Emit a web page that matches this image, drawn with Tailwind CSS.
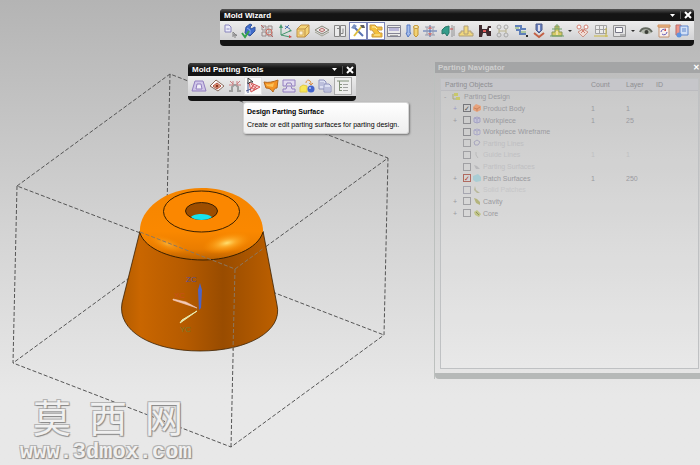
<!DOCTYPE html>
<html lang="en">
<head>
    <meta charset="UTF-8">
    <meta name="viewport" content="width=device-width, initial-scale=1.0">
    <title>Mold Wizard - Parting</title>
    <script src="https://cdn.jsdelivr.net/npm/@tailwindcss/browser@4"></script>
</head>
<body class="relative min-h-screen overflow-hidden bg-linear-to-b from-[#b4b4b4] via-[#d4d4d4] via-50% to-[#e8e8e8] to-85% font-['Liberation_Sans',Arial,sans-serif] text-[7px] leading-[11px] text-black">

    <!-- 3D viewport -->
    <main>
        <svg class="absolute left-0 top-0" width="400" height="460" viewBox="0 0 400 460" role="img" aria-label="Product body inside workpiece">
            <defs>
                <linearGradient id="wall" x1="0" x2="1">
                    <stop offset="0" stop-color="#b35c00"/>
                    <stop offset=".12" stop-color="#c96600"/>
                    <stop offset=".4" stop-color="#b65b00"/>
                    <stop offset=".65" stop-color="#994c00"/>
                    <stop offset="1" stop-color="#bd6000"/>
                </linearGradient>
                <linearGradient id="dome" x1="0" y1="0" x2="0" y2="1">
                    <stop offset="0" stop-color="#f58500"/>
                    <stop offset=".6" stop-color="#fa8800"/>
                    <stop offset=".85" stop-color="#ea7d00"/>
                    <stop offset="1" stop-color="#b96000"/>
                </linearGradient>
                <radialGradient id="shine">
                    <stop offset="0" stop-color="#ffe070"/>
                    <stop offset=".35" stop-color="#ffb330" stop-opacity=".8"/>
                    <stop offset="1" stop-color="#ff9000" stop-opacity="0"/>
                </radialGradient>
            </defs>
            <!-- workpiece edges behind the body -->
            <g fill="none" stroke="#555" stroke-width="1" stroke-dasharray="4 2">
                <path d="M17 186 170 74 388 158 235 269Z"/>
                <path d="M17 186 13 363 231 447 384 335 388 158"/>
                <path d="M170 74 166 251 13 363M166 251 384 335M235 269 231 447"/>
            </g>
            <!-- product body -->
            <path d="M140 231 122 303C117 331 152 351 200 351C248 351 283 331 277 305L263 231Z" fill="url(#wall)" stroke="#3a2000" stroke-width=".8"/>
            <path d="M140 233C138 212 162 188 202 188C240 188 264 211 263 232C258 249 231 260 203 260C172 260 145 249 140 233Z" fill="url(#dome)"/>
            <path d="M140 233C145 249 172 260 203 260C231 260 258 249 263 232" fill="none" stroke="#3a2000"/>
            <ellipse cx="227" cy="243" rx="25" ry="10" fill="url(#shine)" transform="rotate(-12 227 243)"/>
            <ellipse cx="167" cy="244" rx="20" ry="7" fill="url(#shine)" opacity=".45" transform="rotate(20 167 244)"/>
            <ellipse cx="201.500" cy="211.500" rx="38" ry="20.500" fill="#fb8700" stroke="#3a2000"/>
            <ellipse cx="201.500" cy="211" rx="16" ry="8.500" fill="#9d4e00" stroke="#3a2000"/>
            <path d="M191 217C194 213 208 213 212 217C208 221 195 221 191 217Z" fill="#18e4ec"/>
            <!-- workpiece edges in front of the body -->
            <path d="M140 232 235 269 264 248M235 269 233 350" fill="none" stroke="#8b7760" stroke-dasharray="4 2"/>
            <!-- datum axes -->
            <path d="M199 310 198 290 200 283 202 290 201 308Z" fill="#4d64c4"/>
            <path d="M197 308 173 300 173 299 186 302Z" fill="#f3c9b8" stroke="#f3c9b8" stroke-width=".6"/>
            <path d="M197 311 180 323 182 320Z" fill="#e8ecb0" stroke="#e8ecb0"/>
            <g font-family="Liberation Sans, Arial, sans-serif" font-size="8">
                <text x="186" y="282" fill="#5a508c">ZC</text>
                <text x="174" y="298" fill="#c8501c">XC</text>
                <text x="180" y="332" fill="#767a2c">YC</text>
            </g>
        </svg>
    </main>

    <!-- Site mark -->
    <div class="absolute bottom-0 left-[20px] text-[#f0f0f0] [text-shadow:1px_1px_1px_#888,-1px_-1px_0_#b4b4b4,1px_-1px_0_#b4b4b4,-1px_1px_0_#b4b4b4]">
        <div lang="zh" class="flex gap-[18px] pl-[13px] font-['Liberation_Sans','Noto_Sans_CJK_SC',sans-serif] text-[38px] leading-[44px]">
            <span>莫</span><span>西</span><span>网</span>
        </div>
        <div class="font-['Liberation_Mono',monospace] text-[22px] leading-[24px] font-bold">www.3dmox.com</div>
    </div>

    <!-- Parting Navigator, faded while inactive -->
    <section aria-label="Parting Navigator" class="absolute -right-[4px] left-[434px] top-[62px] rounded-t-sm border-l border-[#bcc0be] text-[#9a9a9f]">
        <header class="flex h-[11px] items-center justify-between bg-[#a4a5a6] pr-[4px] pl-[3px] text-[8px] font-bold text-[#cfcfcf]">
            <h2>Parting Navigator</h2>
            <button aria-label="Close navigator" class="text-white">✕</button>
        </header>
        <div class="mx-[5px] mt-[5px] h-[291px] border border-[#bfc1c3] bg-white/15">
            <table class="h-[140px] w-full table-fixed border-collapse text-left">
                <colgroup><col class="w-[150px]"><col class="w-[35px]"><col class="w-[30px]"><col></colgroup>
                <thead>
                    <tr class="border-b border-[#bcbcc0] bg-[#c6c6ca] text-[#8e8e92]">
                        <th class="pl-[4px] font-normal">Parting Objects</th>
                        <th class="font-normal">Count</th>
                        <th class="font-normal">Layer</th>
                        <th class="font-normal">ID</th>
                    </tr>
                </thead>
                <tbody>
                    <tr>
                        <td><div class="flex items-center gap-[3px] pl-[3px]"><span class="w-[5px]">-</span><svg width="9" height="9" viewBox="0 0 9 9"><path d="M2 1h4v3H2zM4 5h4v3H4z" fill="#c8c86c"/><path d="M1 2v5h3" fill="none" stroke="#a9a97a"/></svg>Parting Design</div></td>
                        <td></td><td></td><td></td>
                    </tr>
                    <tr>
                        <td><label class="flex items-center gap-[2px] pl-[12px]"><span class="w-[8px] text-[#9999c4]">+</span><input type="checkbox" checked class="flex size-[8px] appearance-none items-center justify-center border border-[#76767a] checked:before:text-[7px] checked:before:text-[#555] checked:before:content-['✓']"><svg width="8" height="8" viewBox="0 0 8 8"><path d="M0 3 3 0 8 2V6L4 8 0 6Z" fill="#e6a27c"/><path d="M1 4 4 5 7 3M4 5v2" stroke="#c9825c" fill="none"/></svg>Product Body</label></td>
                        <td>1</td><td>1</td><td></td>
                    </tr>
                    <tr>
                        <td><label class="flex items-center gap-[2px] pl-[12px]"><span class="w-[8px]">+</span><input type="checkbox" class="size-[8px] appearance-none border border-[#8d8d91]"><svg width="8" height="8" viewBox="0 0 8 8"><path d="M1 2 4 1 7 2V6L4 7 1 6ZM1 2 4 3 7 2M4 3V7" stroke="#a5a3c4" fill="#c4c3d8"/></svg>Workpiece</label></td>
                        <td>1</td><td>25</td><td></td>
                    </tr>
                    <tr>
                        <td><label class="flex items-center gap-[2px] pl-[12px]"><span class="w-[8px]"></span><input type="checkbox" class="size-[8px] appearance-none border border-[#8d8d91]"><svg width="8" height="8" viewBox="0 0 8 8"><path d="M1 2 4 1 7 2V6L4 7 1 6ZM1 2 4 3 7 2M4 3V7" stroke="#aba9c8" fill="none"/></svg>Workpiece Wireframe</label></td>
                        <td></td><td></td><td></td>
                    </tr>
                    <tr class="text-[#bebec1]">
                        <td><label class="flex items-center gap-[2px] pl-[12px]"><span class="w-[8px]"></span><input type="checkbox" class="size-[8px] appearance-none border border-[#a0a0a3]"><svg width="8" height="8" viewBox="0 0 8 8"><path d="M1 3 4 1 7 3 5 6H2Z" stroke="#a8a6be" fill="none"/></svg>Parting Lines</label></td>
                        <td></td><td></td><td></td>
                    </tr>
                    <tr class="text-[#c0c0c2]">
                        <td><label class="flex items-center gap-[2px] pl-[12px]"><span class="w-[8px]"></span><input type="checkbox" class="size-[8px] appearance-none border border-[#a0a0a3]"><svg width="8" height="8" viewBox="0 0 8 8"><path d="M3 1v3l2 3" stroke="#bbb" fill="none"/></svg>Guide Lines</label></td>
                        <td>1</td><td>1</td><td></td>
                    </tr>
                    <tr class="text-[#c0c0c2]">
                        <td><label class="flex items-center gap-[2px] pl-[12px]"><span class="w-[8px]"></span><input type="checkbox" class="size-[8px] appearance-none border border-[#a0a0a3]"><svg width="8" height="8" viewBox="0 0 8 8"><path d="M1 2 4 3 7 6H3Z" fill="#b9b9bb"/></svg>Parting Surfaces</label></td>
                        <td></td><td></td><td></td>
                    </tr>
                    <tr>
                        <td><label class="flex items-center gap-[2px] pl-[12px]"><span class="w-[8px]">+</span><input type="checkbox" checked class="flex size-[8px] appearance-none items-center justify-center border border-[#b06a60] checked:before:text-[7px] checked:before:text-[#b0402c] checked:before:content-['✓']"><svg width="8" height="8" viewBox="0 0 8 8"><path d="M0 2 5 0 8 3V7L3 8 0 6Z" fill="#a9cdd4"/></svg>Patch Surfaces</label></td>
                        <td>1</td><td>250</td><td></td>
                    </tr>
                    <tr class="text-[#c6c6c8]">
                        <td><label class="flex items-center gap-[2px] pl-[12px]"><span class="w-[8px]"></span><input type="checkbox" class="size-[8px] appearance-none border border-[#a6a6b0]"><svg width="8" height="8" viewBox="0 0 8 8"><path d="M2 0 3 4 7 7H4L1 4Z" fill="#b9b99c"/></svg>Solid Patches</label></td>
                        <td></td><td></td><td></td>
                    </tr>
                    <tr>
                        <td><label class="flex items-center gap-[2px] pl-[12px]"><span class="w-[8px]">+</span><input type="checkbox" class="size-[8px] appearance-none border border-[#a0a0a3]"><svg width="8" height="8" viewBox="0 0 8 8"><path d="M1 1 4 2 7 5V8L3 6Z" fill="#b4b47c"/></svg>Cavity</label></td>
                        <td></td><td></td><td></td>
                    </tr>
                    <tr>
                        <td><label class="flex items-center gap-[2px] pl-[12px]"><span class="w-[8px]">+</span><input type="checkbox" class="size-[8px] appearance-none border border-[#a0a0a3]"><svg width="8" height="8" viewBox="0 0 8 8"><path d="M1 3 4 1 8 5 6 8 2 6Z" fill="#c0c488"/><path d="M3 3 6 6" stroke="#8f925f"/></svg>Core</label></td>
                        <td></td><td></td><td></td>
                    </tr>
                </tbody>
            </table>
        </div>
        <div class="mt-[4px] h-[6px] rounded-bl-sm bg-[#b6b9b8]"></div>
    </section>

    <!-- Mold Wizard toolbar -->
    <section aria-label="Mold Wizard" class="absolute left-[220px] right-[6px] top-[9px] rounded-sm bg-[#141414] pb-[6px]">
        <header class="flex h-[12px] items-center justify-between rounded-t-sm bg-linear-to-b from-[#555] to-[#141414] to-40% pl-[4px] text-[8px] font-bold text-white">
            <h2>Mold Wizard</h2>
            <div class="flex items-center gap-[5px] pr-[2px]">
                <button aria-label="Toolbar options"><svg width="5" height="3" viewBox="0 0 5 3"><path d="M0 0h5L2.500 3z" fill="#fff"/></svg></button>
                <button aria-label="Close Mold Wizard" class="border-l border-[#555] pl-[3px]"><svg width="8" height="8" viewBox="0 0 8 8"><path d="M1 1 7 7M7 1 1 7" stroke="#fff" stroke-width="2"/></svg></button>
            </div>
        </header>
        <div class="flex h-[19px] items-center justify-between bg-linear-to-b from-[#ededed] to-[#d2d2d4] pr-[3px] pl-[2px] *:flex *:h-[18px] *:items-center *:justify-center [&_svg]:opacity-85">
            <button class="w-[18px]" aria-label="Initialize Project"><svg width="16" height="16" viewBox="0 0 16 16"><path d="M2 2h4l2 2v5H2z" fill="#eef" stroke="#7a76b8"/><path d="M3.500 6h3" stroke="#7a76b8"/><path d="M10 9v5M10 9l4 4M12 11v4M10 12h4" stroke="#777"/></svg></button>
            <button class="w-[18px]" aria-label="Mold Design Validation"><svg width="16" height="16" viewBox="0 0 16 16"><path d="M5 4 9 1 11 2 9 4 10 6 14 4 14 8 9 13 4 10Z" fill="#2458c8" stroke="#163c90"/><path d="M6 5 9 7 9 11" fill="none" stroke="#7ea6f0"/><path d="M1 10 4 14 8 8" fill="none" stroke="#1c9a35" stroke-width="2"/></svg></button>
            <button class="w-[18px]" aria-label="Multi Cavity"><svg width="16" height="16" viewBox="0 0 16 16"><path d="M3 3h4v4H3zM9 3h4v4H9zM3 9h4v4H3zM9 9h4v4H9z" fill="#ddd" stroke="#8c7c7c"/><circle cx="10" cy="9" r="3" fill="none" stroke="#cc5a4c"/><path d="M2 2 5 5M12 12 14 14" stroke="#b05050"/></svg></button>
            <button class="w-[18px]" aria-label="Mold CSYS"><svg width="16" height="16" viewBox="0 0 16 16"><path d="M4 12V3M4 12l9-4M4 12l9 2" fill="none" stroke="#2c8c5a"/><path d="M2 5 4 1 6 5zM13 6l2 2-3 1z" fill="#2c8c5a"/><path d="M8 3l5 3M8 6l4-4" stroke="#3560a8"/><path d="M12 12l3 2-3 1z" fill="#c33"/></svg></button>
            <button class="w-[18px]" aria-label="Workpiece"><svg width="16" height="16" viewBox="0 0 16 16"><path d="M2 6 6 2H14V10L10 14H2Z" fill="#f7d264" stroke="#b9822c"/><path d="M2 6H10V14M10 6 14 2" fill="none" stroke="#b9822c"/><path d="M4 8h4v4H4z" fill="#fff6d8" stroke="#d9a850"/></svg></button>
            <button class="w-[18px]" aria-label="Cavity Layout"><svg width="16" height="16" viewBox="0 0 16 16"><path d="M1 7 8 3 15 7 8 11Z" fill="#eee" stroke="#776"/><path d="M1 9 8 13 15 9" fill="none" stroke="#998"/><path d="M5 7 8 5 11 7 8 9Z" fill="#f0d0c8" stroke="#a55"/></svg></button>
            <button class="w-[18px]" aria-label="Mold Tools"><svg width="16" height="16" viewBox="0 0 16 16"><path d="M2.500 2.500h5v11h-5zM8.500 2.500h5v11h-5z" fill="#eee" stroke="#777"/><path d="M5 5.500h3v5h3v-5" fill="none" stroke="#777"/></svg></button>
            <button class="w-[18px] border border-[#7a84b8] bg-white" aria-label="Mold Parting Tools"><svg width="16" height="16" viewBox="0 0 16 16"><path d="M4 4 13 13" stroke="#3d5ca8" stroke-width="2"/><path d="M12 3 4 13" stroke="#d9b520" stroke-width="2"/><path d="M1 5 4 1 7 3 4 6Z" fill="#6480b8"/><path d="M10 2 14 2 15 5 12 5Z" fill="#444"/></svg></button>
            <button class="w-[18px] border border-[#7a84b8] bg-white" aria-label="Mold Trimming"><svg width="16" height="16" viewBox="0 0 16 16"><path d="M2 2h5l2 2h5v3H9l3 3h2v4H4v-3h3L4 7H2z" fill="#f2b51c" stroke="#c58a22"/><path d="M4 4h3l2 2M6 12h6" fill="none" stroke="#fff0a0"/></svg></button>
            <button class="w-[18px]" aria-label="Mold Base Library"><svg width="16" height="16" viewBox="0 0 16 16"><path d="M1.500 2.500h13v11h-13z" fill="#eee" stroke="#778"/><path d="M2 4.500h12M2 10.500h12" stroke="#778"/><path d="M3 5h10v3H3z" fill="#b4b0d8"/><path d="M4 12.500h8" stroke="#999"/></svg></button>
            <button class="w-[18px]" aria-label="Standard Part Library"><svg width="16" height="16" viewBox="0 0 16 16"><path d="M3 2h3v8h1l-3 4-2-4h1z" fill="#9cb8ee" stroke="#3c68c0"/><path d="M10 3h4v9l-2 2-2-2z" fill="#f6d060" stroke="#c08a18"/><ellipse cx="12" cy="4" rx="2.500" ry="1.500" fill="#fff0b0" stroke="#c08a18"/></svg></button>
            <button class="w-[18px]" aria-label="Ejector Pin"><svg width="16" height="16" viewBox="0 0 16 16"><path d="M1 8h14M8 2v12" stroke="#3558a8"/><path d="M3 4h10M3 12h10M5 4v8M11 4v8" stroke="#8a90a4"/><path d="M6 6l2-3 2 3zM6 10l2 3 2-3z" fill="#c66"/></svg></button>
            <button class="w-[18px]" aria-label="Slide and Lifter"><svg width="16" height="16" viewBox="0 0 16 16"><path d="M2 11 2 7 5 4 9 3 9 10 7 13 5 10Z" fill="#16917c" stroke="#0c6656"/><path d="M12 2v12M14 3v10" stroke="#888"/><path d="M10 6h3" stroke="#c33"/></svg></button>
            <button class="w-[18px]" aria-label="Sub-Insert Library"><svg width="16" height="16" viewBox="0 0 16 16"><path d="M6 3h4v5h3v2h2v3H1v-3h2V8h3z" fill="#f4d76c" stroke="#a8946a"/><path d="M6 8v3h4V8" fill="none" stroke="#a8946a"/></svg></button>
            <button class="w-[18px]" aria-label="Gate Library"><svg width="16" height="16" viewBox="0 0 16 16"><path d="M2 2h3v4h5l1-3h3v10h-4l-1-3H6l-1 4H2z" fill="#240c10"/><path d="M6 7h3v2H6z" fill="#e04040"/><path d="M12 5h2v3h-2z" fill="#fff"/></svg></button>
            <button class="w-[18px]" aria-label="Runner"><svg width="16" height="16" viewBox="0 0 16 16"><g fill="none" stroke="#a0a0a0"><circle cx="4" cy="4" r="2"/><circle cx="11" cy="4" r="2"/><circle cx="4" cy="12" r="2"/><circle cx="11" cy="12" r="2"/><path d="M4 6v4M11 6v4M4 8h7" stroke="#b5ad80"/></g></svg></button>
            <button class="w-[18px]" aria-label="Cooling Tools"><svg width="16" height="16" viewBox="0 0 16 16"><path d="M2 3h6v3h5M3 7h4v4h6" fill="none" stroke="#4a70b4" stroke-width="2"/><path d="M2 5h4M8 9h5" stroke="#6aa84a"/><path d="M13 12h2v2h-2z" fill="#111"/></svg></button>
            <button class="w-[18px]" aria-label="Electrode"><svg width="16" height="16" viewBox="0 0 16 16"><path d="M5 1h6v6L8 10 5 7z" fill="#5470b8" stroke="#34447c"/><path d="M7 2h2v6H7z" fill="#dde"/><path d="M3 10 8 14 13 10" fill="none" stroke="#c04c2c" stroke-width="2"/></svg></button>
            <button class="w-[18px]" aria-label="Trim Mold Components"><svg width="16" height="16" viewBox="0 0 16 16"><path d="M6 3h4v6h3v4H3V9h3z" fill="#d6c850" stroke="#7d8a44"/><path d="M1 13h14M3 6h10M8 1v5" stroke="#5a9858"/><path d="M7 8h2v4H7z" fill="#f4e09c"/></svg></button>
            <button class="w-[8px]" aria-label="More trim tools"><svg width="4" height="2" viewBox="0 0 4 2"><path d="M0 0h4L2 2z" fill="#111"/></svg></button>
            <button class="w-[18px]" aria-label="Pocket"><svg width="16" height="16" viewBox="0 0 16 16"><path d="M3 9 8 6 13 9 8 14Z" fill="#f4dcd4" stroke="#c88878"/><circle cx="4" cy="4" r="2" fill="#fff" stroke="#d07060"/><circle cx="11" cy="4" r="2" fill="#fff" stroke="#d07060"/><path d="M6 6l4 4M10 6l-4 4" stroke="#d07060"/></svg></button>
            <button class="w-[18px]" aria-label="Bill of Materials"><svg width="16" height="16" viewBox="0 0 16 16"><path d="M2.500 2.500h11v8h-11z" fill="#eee" stroke="#999"/><path d="M6.500 3v8M10.500 3v8M2 6.500h12" stroke="#999"/><path d="M1 13h14M13 5v9" stroke="#c8b428"/></svg></button>
            <button class="w-[18px]" aria-label="Mold Drawing"><svg width="16" height="16" viewBox="0 0 16 16"><path d="M2.500 2.500h12v11h-12z" fill="#e4e4e4" stroke="#888"/><path d="M4.500 4.500h7v5h-7z" fill="#fff" stroke="#667"/><path d="M9 12h5" stroke="#777"/></svg></button>
            <button class="w-[8px]" aria-label="More drawing tools"><svg width="4" height="2" viewBox="0 0 4 2"><path d="M0 0h4L2 2z" fill="#111"/></svg></button>
            <button class="w-[18px]" aria-label="View Manager"><svg width="16" height="16" viewBox="0 0 16 16"><path d="M3 9C5 5 11 5 14 9 11 12 6 12 3 9Z" fill="#a9b0a2"/><path d="M2 9C4 4 11 4 14 9" fill="none" stroke="#4d5448" stroke-width="2"/><circle cx="8.500" cy="9" r="2" fill="#20241c"/></svg></button>
            <button class="w-[18px]" aria-label="Delete Files"><svg width="16" height="16" viewBox="0 0 16 16"><path d="M3 4h10v10H3z" fill="#fff4f0" stroke="#c08860"/><path d="M2 2h12v2H2z" fill="#f4b878" stroke="#c88048"/><path d="M5 9a3 3 0 0 1 5-2M11 9a3 3 0 0 1-5 2" fill="none" stroke="#5048b0"/><path d="M10 5v3H8z" fill="#c33"/></svg></button>
            <button class="w-[18px]" aria-label="Concept Design"><svg width="16" height="16" viewBox="0 0 16 16"><path d="M2 2h5v10H2z" fill="#f08878" stroke="#b05858"/><path d="M6 3h8v9H6z" fill="#cfe0fb" stroke="#4a78c8"/><path d="M8 6h4M8 8h4" stroke="#4a78c8"/><circle cx="5" cy="12" r="2.500" fill="#4a88e0"/></svg></button>
        </div>
    </section>

    <!-- Mold Parting Tools toolbar -->
    <section aria-label="Mold Parting Tools" class="absolute left-[188px] top-[63px] w-[168px] rounded-sm bg-[#141414] pb-[5px]">
        <header class="flex h-[13px] items-center justify-between rounded-t-sm bg-linear-to-b from-[#444] to-[#141414] to-40% pl-[4px] text-[8px] font-bold text-white">
            <h2>Mold Parting Tools</h2>
            <div class="flex items-center gap-[5px] pr-[2px]">
                <button aria-label="Toolbar options"><svg width="5" height="3" viewBox="0 0 5 3"><path d="M0 0h5L2.500 3z" fill="#fff"/></svg></button>
                <button aria-label="Close Mold Parting Tools" class="border-l border-[#555] pl-[3px]"><svg width="8" height="8" viewBox="0 0 8 8"><path d="M1 1 7 7M7 1 1 7" stroke="#fff" stroke-width="2"/></svg></button>
            </div>
        </header>
        <div class="flex h-[20px] items-center bg-linear-to-b from-[#ededed] to-[#d2d2d4] pl-[2px] *:flex *:size-[18px] *:items-center *:justify-center [&_svg]:opacity-90">
            <button aria-label="Design Regions"><svg width="16" height="16" viewBox="0 0 16 16"><path d="M4 3h8l3 10H1z" fill="#cfc4ea" stroke="#8a74bc"/><path d="M6 6h4l1 5H5z" fill="#f4f2fa" stroke="#8a74bc"/></svg></button>
            <button aria-label="Patch Surfaces"><svg width="16" height="16" viewBox="0 0 16 16"><path d="M1 8 7 2 15 8 9 13Z" fill="#fff" stroke="#806050"/><path d="M4 8 8 5 12 8 8 11Z" fill="#f0b088" stroke="#b04030"/><circle cx="8" cy="8" r="1.500" fill="#802010"/></svg></button>
            <button aria-label="Define Regions"><svg width="16" height="16" viewBox="0 0 16 16"><path d="M2 13h3V9l2-2h2l2 2v4h3" fill="none" stroke="#999" stroke-width="2"/><path d="M3 3l3 3M13 3l-3 3M2 7h4V3M14 7h-4V3" fill="none" stroke="#c87478"/></svg></button>
            <button class="border border-[#e2e2e2] bg-[#fafafa]" aria-label="Design Parting Surface" aria-describedby="tip"><svg width="16" height="16" viewBox="0 0 16 16"><path d="M4 4 15 9 6 14Z" fill="#fbd4d4" stroke="#d04848"/><path d="M6 6l6 5M6 9l4 3M8 13l4-6M6 11l3-5" stroke="#d04848"/><path d="M3 4v11M1 13l5-2" stroke="#3a4a88"/><path d="M3 0v6l2-2h3z" fill="#fff" stroke="#222"/></svg></button>
            <button aria-label="Edit Parting Surfaces and Patch Surfaces"><svg width="16" height="16" viewBox="0 0 16 16"><path d="M1 4C5 5 10 4 15 2L14 10C11 10 11 12 10 14 8 11 6 10 3 10Z" fill="#f78c12" stroke="#b05c08"/><path d="M3 6C6 7 9 6 11 5L10 9 4 8Z" fill="#ffc04c"/></svg></button>
            <button aria-label="Define Cavity and Core"><svg width="16" height="16" viewBox="0 0 16 16"><path d="M2 2h12v6h-3L10 5H6L5 8H2z" fill="#e2daf2" stroke="#8a74bc"/><path d="M2 14v-3h3l1-3h4l1 3h3v3z" fill="#e2daf2" stroke="#8a74bc"/></svg></button>
            <button aria-label="Swap Model"><svg width="16" height="16" viewBox="0 0 16 16"><path d="M1 9 4 7 8 8V14H1Z" fill="#fbe848" stroke="#e2c834"/><path d="M7 5C7 1 12 1 12 6M10 5l2 2 2-2" fill="none" stroke="#d88838"/><circle cx="12" cy="11" r="3.500" fill="#3458cc"/><circle cx="11" cy="10" r="1" fill="#b4c8ff"/></svg></button>
            <button aria-label="Back Up Parting and Patch Sheets"><svg width="16" height="16" viewBox="0 0 16 16"><path d="M2 2h5l2 2v7H2z" fill="#dce0f4" stroke="#8488b8"/><path d="M7 6h5l2 2v6H7z" fill="#dce0f4" stroke="#8488b8"/><path d="M3 5h4M3 7h3M8 10h5M8 12h5" stroke="#9498c4"/></svg></button>
            <button class="border border-[#aaa] bg-[#eee]" aria-label="Parting Navigator"><svg width="16" height="16" viewBox="0 0 16 16"><path d="M2 3h12M4.500 3v10M4 6.500h3M4 9.500h3M4 12.500h3" fill="none" stroke="#76886c"/><path d="M8 6.500h5M8 9.500h5M8 12.500h5" stroke="#999"/></svg></button>
        </div>
    </section>

    <!-- Tooltip under the hovered command -->
    <div id="tip" role="tooltip" class="absolute left-[243px] top-[102px] rounded-[3px] border border-[#d4d4d4] bg-linear-to-b from-white to-[#eeeeee] py-[3px] pr-[9px] pl-[3px] whitespace-nowrap shadow-[1px_1px_2px_#777]">
        <p class="font-bold">Design Parting Surface</p>
        <p class="mt-[2px]">Create or edit parting surfaces for parting design.</p>
    </div>
</body>
</html>
